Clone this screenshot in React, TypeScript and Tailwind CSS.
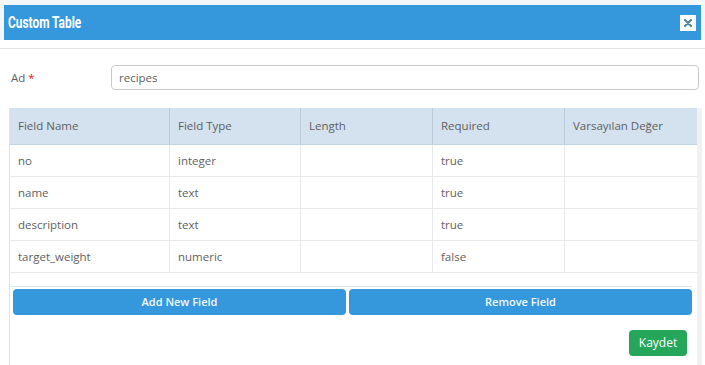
import React from "react";

const columns = [
  { label: "Field Name", width: "w-[159px]" },
  { label: "Field Type", width: "w-[131px]" },
  { label: "Length", width: "w-[132px]" },
  { label: "Required", width: "w-[132px]" },
  { label: "Varsayılan Değer", width: "w-[132px]" },
];

const rows = [
  ["no", "integer", "", "true", ""],
  ["name", "text", "", "true", ""],
  ["description", "text", "", "true", ""],
  ["target_weight", "numeric", "", "false", ""],
];

export default function App() {
  return (
    <div className="w-[705px] h-[365px] overflow-hidden bg-white flex flex-col font-['Open_Sans',sans-serif] text-[11.5px] text-[#5f5f5f]">
      {/* modal header */}
      <div className="bg-[#f2f8fa] px-[4px] pt-[5px]">
        <div className="h-[35px] bg-[#3598dc] flex items-center justify-between pl-[4px] pr-[5px]">
          <span className="inline-block origin-left scale-x-[0.7] font-['Roboto',sans-serif] font-bold text-[17px] text-white">
            Custom Table
          </span>
          <button className="w-[16px] h-[16px] bg-white flex items-center justify-center">
            <svg width="8" height="8" viewBox="0 0 8 8">
              <path d="M1 1L7 7M7 1L1 7" stroke="#4a7fa6" strokeWidth="2" strokeLinecap="round" />
            </svg>
          </button>
        </div>
      </div>
      <div className="h-[8px] bg-white" />
      <div className="h-px bg-[#e2e2e2]" />

      {/* name row */}
      <div className="flex items-center mt-[16px] pl-[11px] pr-[6px]">
        <label className="w-[100px]">
          Ad <span className="text-[#e02222]">*</span>
        </label>
        <div className="flex-1 h-[25px] border border-[#c9c9c9] rounded-[4px] flex items-center px-[7px]">
          recipes
        </div>
      </div>

      {/* table panel */}
      <div className="flex-1 mt-[18px] ml-[9px] w-[693px] border-l border-[#e2e2e2] flex">
        <div className="w-[687px] flex flex-col">
          <div className="flex h-[37px] bg-[#d3e2ee] border-b border-[#c3d3df]">
            {columns.map((c, i) => (
              <div
                key={c.label}
                className={`${c.width} flex items-center pl-[8px] ${i > 0 ? "border-l border-[#bccbd8]" : ""}`}
              >
                {c.label}
              </div>
            ))}
          </div>
          {rows.map((r, ri) => (
            <div key={ri} className="flex h-[32px] border-b border-[#e7e9ec]">
              {r.map((v, i) => (
                <div
                  key={i}
                  className={`${columns[i].width} flex items-center pl-[8px] ${i > 0 ? "border-l border-[#e7e9ec]" : ""}`}
                >
                  {v}
                </div>
              ))}
            </div>
          ))}
          <div className="h-[13px]" />
          <div className="h-[3px] border-t border-[#d6e6ef] w-[682px]" />
          <div className="flex gap-[3px] pl-[3px]">
            <button className="w-[333px] h-[26px] bg-[#3598dc] rounded-[4px] text-[#f2f8fc] text-[11px] font-semibold">
              Add New Field
            </button>
            <button className="w-[343px] h-[26px] bg-[#3598dc] rounded-[4px] text-[#f2f8fc] text-[11px] font-semibold">
              Remove Field
            </button>
          </div>
          <div className="flex justify-end pr-[10px] mt-[15px]">
            <button className="h-[26px] w-[58px] bg-[#26a65b] rounded-[4px] text-white text-[12px]">
              Kaydet
            </button>
          </div>
        </div>
        <div className="w-[5px] bg-[#f1f1f1]" />
      </div>
    </div>
  );
}
